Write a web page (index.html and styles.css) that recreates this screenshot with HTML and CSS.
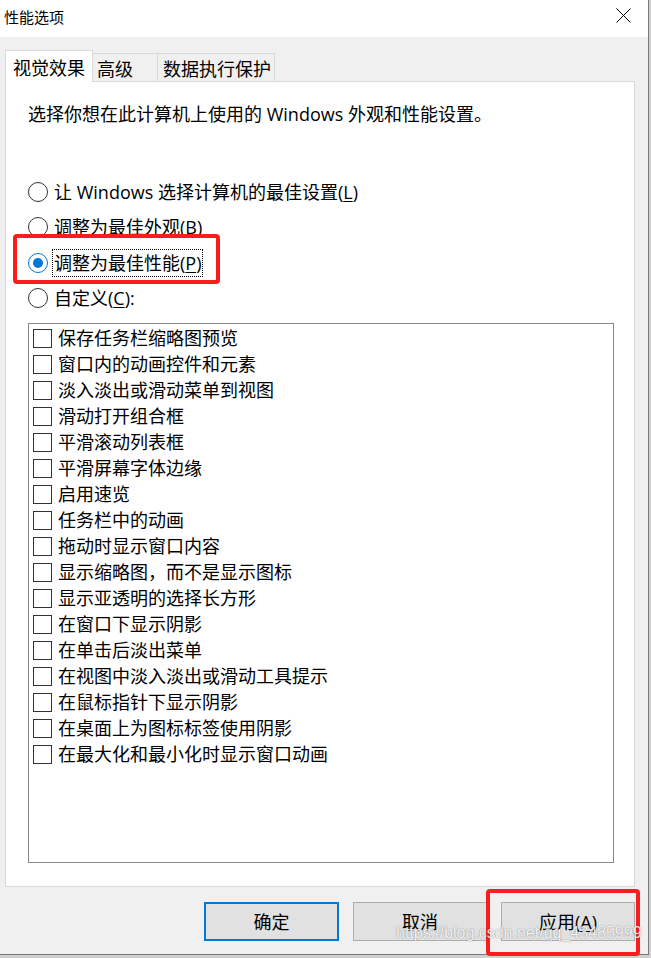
FILE: index.html
```html
<!DOCTYPE html>
<html lang="zh-CN">
<head>
<meta charset="utf-8">
<title>性能选项</title>
<link rel="stylesheet" href="styles.css">
</head>
<body>
<div class="window">
  <div class="titlebar">
    <span class="title">性能选项</span>
    <svg class="close" width="15" height="15" viewBox="0 0 15 15"><path d="M0.5 0.5 L14.5 14.5 M14.5 0.5 L0.5 14.5" stroke="#000" stroke-width="1" fill="none"/></svg>
  </div>
  <div class="content">
    <div class="tabs">
      <div class="tab tab-active">视觉效果</div>
      <div class="tab tab-adv">高级</div>
      <div class="tab tab-dep">数据执行保护</div>
    </div>
    <div class="panel">
      <p class="desc">选择你想在此计算机上使用的 Windows 外观和性能设置。</p>
      <div class="radios">
        <div class="radio-row"><span class="radio"></span><span class="rlabel">让 Windows 选择计算机的最佳设置(<u>L</u>)</span></div>
        <div class="radio-row"><span class="radio"></span><span class="rlabel">调整为最佳外观(<u>B</u>)</span></div>
        <div class="radio-row"><span class="radio radio-on"></span><span class="rlabel rlabel-focus">调整为最佳性能(<u>P</u>)</span></div>
        <div class="radio-row"><span class="radio"></span><span class="rlabel">自定义(<u>C</u>):</span></div>
      </div>
      <div class="listbox">
        <div class="item"><span class="check"></span><span>保存任务栏缩略图预览</span></div>
        <div class="item"><span class="check"></span><span>窗口内的动画控件和元素</span></div>
        <div class="item"><span class="check"></span><span>淡入淡出或滑动菜单到视图</span></div>
        <div class="item"><span class="check"></span><span>滑动打开组合框</span></div>
        <div class="item"><span class="check"></span><span>平滑滚动列表框</span></div>
        <div class="item"><span class="check"></span><span>平滑屏幕字体边缘</span></div>
        <div class="item"><span class="check"></span><span>启用速览</span></div>
        <div class="item"><span class="check"></span><span>任务栏中的动画</span></div>
        <div class="item"><span class="check"></span><span>拖动时显示窗口内容</span></div>
        <div class="item"><span class="check"></span><span>显示缩略图，而不是显示图标</span></div>
        <div class="item"><span class="check"></span><span>显示亚透明的选择长方形</span></div>
        <div class="item"><span class="check"></span><span>在窗口下显示阴影</span></div>
        <div class="item"><span class="check"></span><span>在单击后淡出菜单</span></div>
        <div class="item"><span class="check"></span><span>在视图中淡入淡出或滑动工具提示</span></div>
        <div class="item"><span class="check"></span><span>在鼠标指针下显示阴影</span></div>
        <div class="item"><span class="check"></span><span>在桌面上为图标标签使用阴影</span></div>
        <div class="item"><span class="check"></span><span>在最大化和最小化时显示窗口动画</span></div>
      </div>
    </div>
    <div class="buttons">
      <button class="btn btn-default">确定</button>
      <button class="btn">取消</button>
      <button class="btn">应用(<u>A</u>)</button>
    </div>
  </div>
  <div class="mark mark-radio"></div>
  <div class="mark mark-apply"></div>
  <div class="watermark">https://blog.csdn.net/qq_43485999</div>
</div>
</body>
</html>
```

FILE: styles.css
```css
* { box-sizing: border-box; }
html, body { margin: 0; padding: 0; }
body {
  width: 651px;
  height: 958px;
  background: #cfcfcf;
  font-family: "Open Sans", "Noto Sans CJK SC", sans-serif;
  color: #000;
  overflow: hidden;
}
.window {
  position: relative;
  width: 649px;
  height: 955px;
  border-right: 1px solid #7a7a7a;
  border-bottom: 1px solid #7a7a7a;
  background: #f0f0f0;
}
.titlebar {
  height: 37px;
  background: #fff;
  display: flex;
  align-items: center;
  justify-content: space-between;
  padding-left: 4px;
  padding-right: 17px;
}
.title {
  font-size: 15px;
  line-height: 20px;
  font-family: "Noto Sans CJK SC", sans-serif;
  margin-top: -4px;
}
.close { display: block; margin-top: -6px; }
.content {
  padding: 0 13px 0 5px;
  height: 917px;
}
.tabs {
  display: flex;
  align-items: flex-end;
  height: 44px;
}
.tab {
  font-size: 18px;
  line-height: 24px;
  font-family: "Noto Sans CJK SC", sans-serif;
  border: 1px solid #d9d9d9;
  border-bottom: none;
  border-left: none;
  height: 28px;
  padding-top: 2px;
  background: #f0f0f0;
  white-space: nowrap;
}
.tab-active {
  position: relative;
  z-index: 1;
  width: 88px;
  height: 32px;
  margin-bottom: -1px;
  background: #fff;
  border-left: 1px solid #d9d9d9;
  padding-left: 7px;
  padding-top: 4px;
}
.tab-adv { width: 65px; padding-left: 4px; }
.tab-dep { width: 117px; padding-left: 5px; }
.panel {
  width: 630px;
  height: 806px;
  background: #fff;
  border: 1px solid #d9d9d9;
  padding: 20px 0 0 22px;
}
.desc {
  margin: 0;
  font-size: 18px;
  line-height: 24px;
}
.radios {
  margin-top: 48px;
}
.radio-row {
  height: 35.5px;
  display: flex;
  align-items: center;
}
.radio {
  width: 20px;
  height: 20px;
  border: 1px solid #333;
  border-radius: 50%;
  margin-right: 4px;
  display: flex;
  align-items: center;
  justify-content: center;
  flex: none;
}
.radio-on { border-color: #0078d7; }
.radio-on::after {
  content: "";
  width: 10px;
  height: 10px;
  border-radius: 50%;
  background: #0078d7;
}
.rlabel {
  font-size: 18px;
  line-height: 26px;
  border: 1px solid transparent;
  padding: 0 1px;
  white-space: nowrap;
}
.rlabel-focus { border: 1px dotted #000; }
u { text-underline-offset: 2px; text-decoration-thickness: 1px; }
.listbox {
  margin-top: 7px;
  width: 586px;
  height: 540px;
  border: 1px solid #828790;
  padding: 1px 0 0 4px;
}
.item {
  height: 26px;
  display: flex;
  align-items: center;
  font-size: 18px;
  line-height: 26px;
  white-space: nowrap;
}
.check {
  width: 19px;
  height: 19px;
  border: 1px solid #333;
  margin-right: 6px;
  flex: none;
}
.buttons {
  display: flex;
  justify-content: flex-end;
  gap: 14px;
  margin-top: 15px;
}
.btn {
  width: 134px;
  height: 39px;
  background: #e1e1e1;
  border: 1px solid #adadad;
  font-family: "Open Sans", "Noto Sans CJK SC", sans-serif;
  font-size: 18px;
  line-height: 24px;
  color: #000;
  padding: 0;
}
.btn-default { border: 2px solid #0078d7; width: 135px; }
.mark {
  position: absolute;
  border: 4px solid #fb1d1d;
  border-radius: 4px;
}
.mark-radio { left: 13px; top: 234px; width: 207px; height: 50px; }
.mark-apply { left: 486px; top: 889px; width: 154px; height: 67px; }
.watermark {
  position: absolute;
  left: 396px;
  top: 922px;
  font-family: "Liberation Sans", sans-serif;
  font-size: 16px;
  line-height: 22px;
  color: rgba(255, 255, 255, 0.9);
  text-shadow: 0 0 1px rgba(0, 0, 0, 0.35), 0 0 2px rgba(0, 0, 0, 0.2);
  white-space: nowrap;
}
```
